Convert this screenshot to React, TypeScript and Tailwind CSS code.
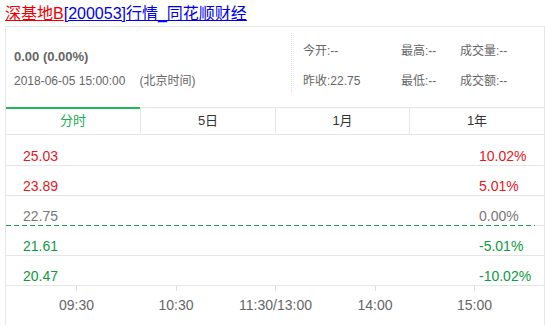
import React from "react";

const rows = [
  { left: "25.03", right: "10.02%", color: "text-[#e3161d]", h: "h-[31px]" },
  { left: "23.89", right: "5.01%", color: "text-[#e3161d]", h: "h-[30px]" },
  { left: "22.75", right: "0.00%", color: "text-[#777]", h: "h-[30px]", dashed: true },
  { left: "21.61", right: "-5.01%", color: "text-[#0c9a3c]", h: "h-[30px]" },
  { left: "20.47", right: "-10.02%", color: "text-[#0c9a3c]", h: "h-[30px]" },
];

const times = ["09:30", "10:30", "11:30/13:00", "14:00", "15:00"];

export default function App() {
  return (
    <div className="w-[545px] h-[325px] overflow-hidden bg-white pl-[5px] font-['Liberation_Sans','Noto_Sans_CJK_SC',sans-serif]">
      <div className="h-[26px] pt-[2px] text-[16px] leading-[24px] whitespace-nowrap">
        <a href="#">
          <span className="text-[#e00] underline">深基地B</span>
          <span className="text-[#00e] underline">[200053]行情_同花顺财经</span>
        </a>
      </div>

      <div className="w-[540px] border-x border-t border-[#e6e6e6]">
        {/* header */}
        <div className="flex h-[80px]">
          <div className="w-[285px] pl-[8px] pt-[20px] text-[#666]">
            <div className="text-[13px] leading-[20px] font-bold">0.00 (0.00%)</div>
            <div className="mt-[4px] text-[12px] leading-[20px] whitespace-nowrap">
              2018-06-05 15:00:00<span className="ml-[14px]">(北京时间)</span>
            </div>
          </div>
          <div className="mt-[6px] h-[59px] border-l border-dotted border-[#ddd] pl-[11px] pt-[8px] text-[12px] leading-[20px] text-[#666]">
            <div className="flex">
              <span className="w-[98px]">今开:--</span>
              <span className="w-[59px]">最高:--</span>
              <span>成交量:--</span>
            </div>
            <div className="flex mt-[10px]">
              <span className="w-[98px]">昨收:22.75</span>
              <span className="w-[59px]">最低:--</span>
              <span>成交额:--</span>
            </div>
          </div>
        </div>

        {/* tabs */}
        <div className="flex h-[28px] border-y border-[#e6e6e6] text-[13px] leading-[16px] text-[#333]">
          <div className="relative w-[135px] border-r border-[#e6e6e6] flex items-center justify-center text-[#1aab50]">
            <div className="absolute -top-[1px] left-0 right-0 h-[2px] bg-[#1db954]" />
            分时
          </div>
          <div className="w-[135px] border-r border-[#e6e6e6] flex items-center justify-center">5日</div>
          <div className="w-[134px] border-r border-[#e6e6e6] flex items-center justify-center">1月</div>
          <div className="flex-1 flex items-center justify-center">1年</div>
        </div>

        {/* price rows */}
        {rows.map((r) => (
          <div
            key={r.left}
            className={`relative flex items-end pb-[2px] pl-[17px] border-b border-[#e6e6e6] text-[14px] leading-[14px] ${r.h} ${r.color}`}
          >
            <span className="w-[456px]">{r.left}</span>
            <span>{r.right}</span>
            {r.dashed && (
              <div className="absolute -bottom-[1px] left-0 w-[529px] h-[1px] bg-[repeating-linear-gradient(to_right,#1a9a4a_0_5px,#fff_5px_8px)]" />
            )}
          </div>
        ))}

        {/* time axis */}
        <div className="flex h-[40px] pl-[20.75px] text-[14px] leading-[16px] text-[#666]">
          {times.map((t) => (
            <div key={t} className="w-[99.5px] flex flex-col items-center">
              <div className="w-[1px] h-[5px] bg-[#ddd]" />
              <div className="mt-[6px] whitespace-nowrap">{t}</div>
            </div>
          ))}
        </div>
      </div>
    </div>
  );
}
